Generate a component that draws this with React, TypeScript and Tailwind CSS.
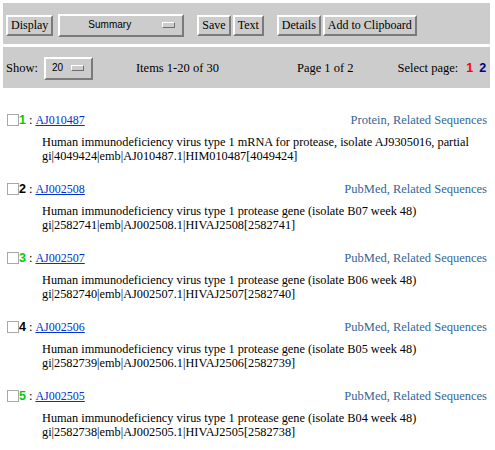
const serif = "font-['Liberation_Serif',_'Times_New_Roman',_serif]";

interface Item {
  n: number;
  acc: string;
  links: string;
  title: string;
  gi: string;
}

const items: Item[] = [
  {
    n: 1,
    acc: 'AJ010487',
    links: 'Protein, Related Sequences',
    title: 'Human immunodeficiency virus type 1 mRNA for protease, isolate AJ9305016, partial',
    gi: 'gi|4049424|emb|AJ010487.1|HIM010487[4049424]',
  },
  {
    n: 2,
    acc: 'AJ002508',
    links: 'PubMed, Related Sequences',
    title: 'Human immunodeficiency virus type 1 protease gene (isolate B07 week 48)',
    gi: 'gi|2582741|emb|AJ002508.1|HIVAJ2508[2582741]',
  },
  {
    n: 3,
    acc: 'AJ002507',
    links: 'PubMed, Related Sequences',
    title: 'Human immunodeficiency virus type 1 protease gene (isolate B06 week 48)',
    gi: 'gi|2582740|emb|AJ002507.1|HIVAJ2507[2582740]',
  },
  {
    n: 4,
    acc: 'AJ002506',
    links: 'PubMed, Related Sequences',
    title: 'Human immunodeficiency virus type 1 protease gene (isolate B05 week 48)',
    gi: 'gi|2582739|emb|AJ002506.1|HIVAJ2506[2582739]',
  },
  {
    n: 5,
    acc: 'AJ002505',
    links: 'PubMed, Related Sequences',
    title: 'Human immunodeficiency virus type 1 protease gene (isolate B04 week 48)',
    gi: 'gi|2582738|emb|AJ002505.1|HIVAJ2505[2582738]',
  },
];

function Button({ label, className = '' }: { label: string; className?: string }) {
  return (
    <div
      className={`h-[21px] px-[3px] flex items-center whitespace-nowrap border-2 border-t-white border-l-white border-b-[#7a7a7a] border-r-[#7a7a7a] bg-[#cccccc] text-[12px] leading-none text-black ${className}`}
    >
      {label}
    </div>
  );
}

function Select({ label, width, textClass }: { label: string; width: string; textClass: string }) {
  return (
    <div
      className={`h-[23px] ${width} flex items-center border-2 border-t-white border-l-white border-b-[#7a7a7a] border-r-[#7a7a7a] bg-[#cccccc]`}
    >
      <span className={`font-['Liberation_Sans',_Arial,_sans-serif] text-[10px] leading-none ${textClass}`}>
        {label}
      </span>
      <span className="ml-auto mr-[7px] w-[13px] h-[6px] border border-t-white border-l-white border-b-[#6e6e6e] border-r-[#6e6e6e] bg-[#cccccc]" />
    </div>
  );
}

export default function App() {
  return (
    <div className={`${serif} bg-white w-[495px] h-[450px] pt-[3px] text-black overflow-hidden`}>
      <div className="ml-[3px] w-[487px] h-[41px] bg-[#cccccc] flex items-center pt-[3px] pl-[3px]">
        <Button label="Display" />
        <div className="ml-[5px]">
          <Select label="Summary" width="w-[126px]" textClass="ml-[28px]" />
        </div>
        <Button label="Save" className="ml-[13px]" />
        <Button label="Text" className="ml-[2px]" />
        <Button label="Details" className="ml-[13px]" />
        <Button label="Add to Clipboard" className="ml-[2px]" />
      </div>
      <div className="ml-[3px] mt-[3px] w-[487px] h-[41px] bg-[#cccccc] flex items-center pt-[1px] pl-[3px] text-[12.5px] whitespace-nowrap">
        <span>Show:</span>
        <div className="ml-[6px]">
          <Select label="20" width="w-[49px]" textClass="ml-[6px]" />
        </div>
        <span className="ml-[43px]">Items 1-20 of 30</span>
        <span className="ml-[78px]">Page 1 of 2</span>
        <span className="ml-[44px]">Select page:</span>
        <span className="ml-[8px] font-['Liberation_Sans',_Arial,_sans-serif] font-bold text-[#ff0000]">1</span>
        <span className="ml-[6px] font-['Liberation_Sans',_Arial,_sans-serif] font-bold text-[#000080]">2</span>
      </div>
      <div className="ml-[3px] w-[484px] mt-[24px] flex flex-col">
        {items.map((it) => (
          <div key={it.n} className="h-[69px] flex flex-col">
            <div className="h-[16px] flex items-center text-[12.5px] leading-[16px] whitespace-nowrap">
              <span className="ml-[4px] w-[12px] h-[12px] border border-[#a8a8a8] bg-white" />
              <span
                className={`font-['Liberation_Sans',_Arial,_sans-serif] font-bold ${
                  it.n % 2 === 1 ? 'text-[#00cc00]' : 'text-black'
                }`}
              >
                {it.n}
              </span>
              <span className="ml-[3px]">:</span>
              <a href="#" className="ml-[3px] text-[12px] text-[#0033cc] underline">
                {it.acc}
              </a>
              <a href="#" className="ml-auto text-[#336699]">
                {it.links}
              </a>
            </div>
            <div className="pl-[39px] mt-[7px] text-[12.3px] leading-[14px] whitespace-nowrap">
              <div>{it.title}</div>
              <div>{it.gi}</div>
            </div>
          </div>
        ))}
      </div>
    </div>
  );
}
